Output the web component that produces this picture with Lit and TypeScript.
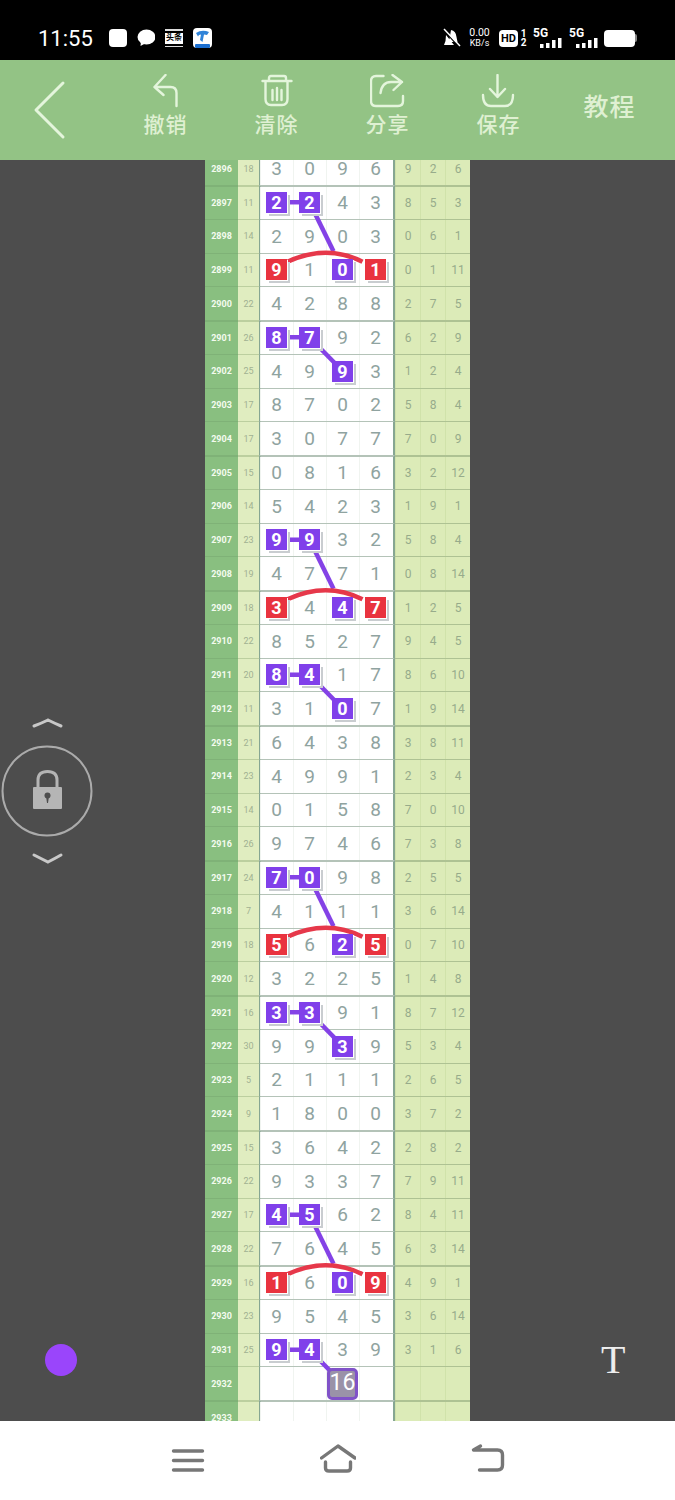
import { LitElement, html, css, svg } from 'lit';
import { customElement } from 'lit/decorators.js';

// issue sum digits right marks (p = purple, r = red, b = big entry box)
const RAW = `2896 18 3096 9,2,6 ....
2897 11 2243 8,5,3 pp..
2898 14 2903 0,6,1 ....
2899 11 9101 0,1,11 r.pr
2900 22 4288 2,7,5 ....
2901 26 8792 6,2,9 pp..
2902 25 4993 1,2,4 ..p.
2903 17 8702 5,8,4 ....
2904 17 3077 7,0,9 ....
2905 15 0816 3,2,12 ....
2906 14 5423 1,9,1 ....
2907 23 9932 5,8,4 pp..
2908 19 4771 0,8,14 ....
2909 18 3447 1,2,5 r.pr
2910 22 8527 9,4,5 ....
2911 20 8417 8,6,10 pp..
2912 11 3107 1,9,14 ..p.
2913 21 6438 3,8,11 ....
2914 23 4991 2,3,4 ....
2915 14 0158 7,0,10 ....
2916 26 9746 7,3,8 ....
2917 24 7098 2,5,5 pp..
2918 7 4111 3,6,14 ....
2919 18 5625 0,7,10 r.pr
2920 12 3225 1,4,8 ....
2921 16 3391 8,7,12 pp..
2922 30 9939 5,3,4 ..p.
2923 5 2111 2,6,5 ....
2924 9 1800 3,7,2 ....
2925 15 3642 2,8,2 ....
2926 22 9337 7,9,11 ....
2927 17 4562 8,4,11 pp..
2928 22 7645 6,3,14 ....
2929 16 1609 4,9,1 r.pr
2930 23 9545 3,6,14 ....
2931 25 9439 3,1,6 pp..`;

type Row = { issue: string; sum: string; digits: string[]; right: string[]; marks: string };

const ROWS: Row[] = RAW.split('\n').map((line) => {
  const [issue, sum, d, r, marks] = line.split(' ');
  return { issue, sum, digits: d.split(''), right: r.split(','), marks };
});
ROWS.push({ issue: '2932', sum: '', digits: ['', '', '16', ''], right: ['', '', ''], marks: '..b.' });
ROWS.push({ issue: '2933', sum: '', digits: ['', '', '', ''], right: ['', '', ''], marks: '....' });

const ROW_H = 33.75;
const cx = (col: number) => 71.5 + 33 * col;
const cy = (i: number) => (i + 0.5) * ROW_H + 0.6;

function overlay() {
  const parts: unknown[] = [];
  ROWS.forEach((row, i) => {
    if (row.marks.startsWith('pp')) {
      const y = cy(i);
      parts.push(svg`<line class="pu" x1=${cx(0) + 11} y1=${y} x2=${cx(1) - 10} y2=${y}></line>`);
      if (ROWS[i + 1].marks[2] !== '.') {
        parts.push(svg`<line class="pu" x1=${cx(1)} y1=${y} x2=${cx(2)} y2=${cy(i + 1)}></line>`);
      } else {
        // stops on the red arc, two rows down
        const t = 0.727;
        parts.push(svg`<line class="pu" x1=${cx(1)} y1=${y} x2=${cx(1) + 33 * t} y2=${y + 2 * ROW_H * t}></line>`);
      }
    }
    if (row.marks[0] === 'r') {
      const y = cy(i);
      parts.push(svg`<path class="re" d="M${cx(0) + 11} ${y - 8} Q${cx(1) + 17} ${y - 26} ${cx(3) - 13} ${y - 8}"></path>`);
    }
  });
  return parts;
}

@customElement('app-root')
export class AppRoot extends LitElement {
  static styles = css`
    :host {
      display: block;
      width: 675px;
      height: 1500px;
      overflow: hidden;
      font-family: Roboto, 'Noto Sans CJK SC', sans-serif;
      background: #4d4d4d;
    }

    .status {
      box-sizing: border-box;
      height: 60px;
      padding: 16px 38px 0;
      background: #000;
      color: #fff;
      display: flex;
      align-items: center;
    }
    .time { font-size: 22px; width: 71px; }
    .left-icons { display: flex; gap: 10px; align-items: center; }
    .sq { width: 18px; height: 18px; background: #fff; border-radius: 4px; }
    .toutiao {
      box-sizing: border-box;
      width: 18px;
      height: 18px;
      border-top: 2px solid #ddd;
      border-bottom: 1px solid #ddd;
      padding: 2px 0;
      display: flex;
    }
    .toutiao span {
      flex: 1;
      background: #fff;
      color: #000;
      font-size: 8px;
      line-height: 10px;
      font-weight: 700;
      text-align: center;
      white-space: nowrap;
      overflow: hidden;
    }
    .right-icons { margin-left: auto; display: flex; align-items: center; }
    .speed { width: 23px; margin: 0 8px 0 7px; text-align: center; font-size: 10.5px; line-height: 10px; }
    .speed small { display: block; font-size: 9px; }
    .hd {
      width: 19px;
      height: 17px;
      border-radius: 4px;
      background: #fff;
      color: #000;
      font-size: 11px;
      font-weight: 700;
      line-height: 17px;
      text-align: center;
    }
    .frac { width: 7px; margin: 0 6px 0 2px; font-size: 10px; line-height: 9px; font-weight: 700; text-align: center; }
    .frac span { display: block; }
    .five { width: 29px; margin-right: 7px; font-size: 12px; line-height: 10px; font-weight: 700; }
    .five svg { display: block; }
    .battery { width: 31px; height: 17px; border-radius: 4px; background: #fff; margin-left: -1px; }
    .nub { width: 2px; height: 8px; background: #888; border-radius: 0 2px 2px 0; }

    .bar {
      height: 100px;
      background: #93c385;
      display: grid;
      grid-template-columns: 110px repeat(5, 111px);
      color: #dff0d2;
    }
    .bar svg { display: block; fill: none; stroke: #e4f5dc; stroke-width: 2.4; stroke-linecap: round; stroke-linejoin: round; }
    .tool {
      padding-top: 15px;
      display: flex;
      flex-direction: column;
      align-items: center;
      font-size: 21px;
      font-weight: 500;
      line-height: 30px;
      letter-spacing: 1px;
    }
    .tool svg { margin-top: -1px; }
    .tutorial {
      display: flex;
      align-items: center;
      justify-content: center;
      padding-bottom: 11px;
      font-size: 25px;
      font-weight: 500;
      letter-spacing: 1px;
    }

    .main {
      position: relative;
      height: 1261px;
      overflow: hidden;
      display: flex;
      justify-content: center;
      background: #4d4d4d;
    }
    .table { position: relative; width: 265px; margin-top: -8.75px; align-self: flex-start; }
    .lines { position: absolute; left: 0; top: 0; pointer-events: none; }
    .lines .pu { stroke: #8442e6; stroke-width: 4.5; }
    .lines .re { stroke: #e6384a; stroke-width: 4.5; fill: none; }

    .row {
      display: grid;
      grid-template-columns: 33px 21px 136px 75px;
      height: 33.75px;
    }
    .row > div { box-sizing: border-box; border-top: 1px solid; }
    .issue {
      background: #89bf80;
      border-color: #7fb277 !important;
      color: #f4fbef;
      font-size: 9px;
      font-weight: 700;
      display: flex;
      align-items: center;
      justify-content: center;
    }
    .sum {
      background: #e0edc0;
      border-color: #bccf9f !important;
      color: #a0b192;
      font-size: 9px;
      display: flex;
      align-items: center;
      justify-content: center;
    }
    .digits {
      display: grid;
      grid-template-columns: repeat(4, 33px);
      background: #fff;
      border-left: 2px solid #86a692;
      border-right: 2px solid #86a692;
      border-top-color: #b4c3b8 !important;
    }
    .d {
      display: flex;
      align-items: center;
      justify-content: center;
      padding-right: 2px;
      color: #8fa3a0;
      font-size: 19px;
      line-height: 15px;
      border-left: 1px solid #f0f4f0;
      margin-left: -1px;
    }
    .d.box span {
      position: relative;
      z-index: 2;
      width: 21px;
      height: 21px;
      line-height: 21px;
      text-align: center;
      color: #fff;
      font-size: 18px;
      font-weight: 700;
      box-shadow: 1px 1px 0 #fff, 3px 3px 0 #c9cdd0;
    }
    .d.p span { background: #8040ea; }
    .d.r span { background: #e9333f; }
    .d.b span {
      position: relative;
      z-index: 2;
      box-sizing: border-box;
      width: 32px;
      height: 32px;
      margin-top: 1px;
      line-height: 24px;
      text-align: center;
      color: #fff;
      font-size: 23px;
      background: #9a92a8;
      border: 3px solid #8052c8;
      border-radius: 5px;
    }
    .right {
      display: grid;
      grid-template-columns: repeat(3, 25px);
      background: #dcebb8;
      border-color: #aec293 !important;
    }
    .right span {
      display: flex;
      align-items: center;
      justify-content: center;
      color: #97ab8b;
      font-size: 12px;
      border-left: 1px solid #d0e2aa;
    }
    .row.group .issue { border-top: 2px solid #77a878; }
    .row.group .sum { border-top: 2px solid #99b795; }
    .row.group .digits { border-top: 2px solid #86a692; }
    .row.group .right { border-top: 2px solid #8ea98a; }

    .lock { position: absolute; left: 0; top: 550px; }
    .dot { position: absolute; left: 45px; top: 1184px; width: 32px; height: 32px; border-radius: 50%; background: #9a45fb; }
    .font-t {
      position: absolute;
      left: 601px;
      top: 1174px;
      color: #eee;
      font-family: 'Liberation Serif', serif;
      font-size: 40px;
      line-height: 52px;
    }

    .nav {
      box-sizing: border-box;
      height: 79px;
      background: #fff;
      padding-top: 21px;
      display: grid;
      grid-template-columns: repeat(3, 150px);
      justify-content: center;
      justify-items: center;
    }
    .nav svg { display: block; fill: none; stroke: #777; stroke-width: 3.4; stroke-linecap: round; stroke-linejoin: round; }
  `;

  private renderRow(row: Row) {
    const first = (Number(row.issue) - 2897) % 4 === 0;
    return html`<div class="row ${first ? 'group' : ''}">
      <div class="issue">${row.issue}</div>
      <div class="sum">${row.sum}</div>
      <div class="digits">
        ${row.digits.map((v, c) => {
          const m = row.marks[c];
          if (m === '.') return html`<div class="d">${v}</div>`;
          return html`<div class="d ${m === 'b' ? 'b' : 'box ' + m}"><span>${v}</span></div>`;
        })}
      </div>
      <div class="right">${row.right.map((v) => html`<span>${v}</span>`)}</div>
    </div>`;
  }

  private signal() {
    return html`<div class="five">
      5G
      <svg width="29" height="10" viewBox="0 0 29 10" fill="#fff">
        <rect x="7" y="6" width="3.5" height="4"></rect>
        <rect x="13" y="5" width="3.5" height="5"></rect>
        <rect x="19" y="2" width="3.5" height="8"></rect>
        <rect x="25" y="0" width="3.5" height="10"></rect>
      </svg>
    </div>`;
  }

  render() {
    return html`
      <div class="status">
        <div class="time">11:55</div>
        <div class="left-icons">
          <div class="sq"></div>
          <svg width="18" height="18" viewBox="0 0 18 18" fill="#fff">
            <ellipse cx="9.5" cy="8" rx="9" ry="7.5"></ellipse>
            <path d="M4 12 L3.5 17 L9 14 Z"></path>
          </svg>
          <div class="toutiao"><span>头条</span></div>
          <svg width="19" height="20" viewBox="0 0 19 20">
            <rect width="19" height="20" rx="4" fill="#fff"></rect>
            <path d="M3 5 Q9 1 16 4 L14 7 L11 6.5 L9.5 14 L7 12 L8 6.5 Q5.5 6.5 5 8.5 Z" fill="#2f83d8"></path>
            <rect x="2" y="16" width="15" height="4" rx="1" fill="#1c6fd0"></rect>
          </svg>
        </div>
        <div class="right-icons">
          <svg width="19" height="20" viewBox="0 0 19 20" fill="#fff">
            <path d="M9 2 Q14 3 14.5 9 L15.5 14 H7 Z M4 7 L12 17 H2 L3.5 13 Z"></path>
            <path d="M1 1 L17 19" stroke="#000" stroke-width="1.5"></path>
            <path d="M2 1 L18 18" stroke="#fff" stroke-width="1.5"></path>
          </svg>
          <div class="speed">0.00<small>KB/s</small></div>
          <div class="hd">HD</div>
          <div class="frac"><span>1</span><span>2</span></div>
          ${this.signal()} ${this.signal()}
          <div class="battery"></div>
          <div class="nub"></div>
        </div>
      </div>

      <div class="bar">
        <div>
          <svg width="110" height="100" viewBox="0 0 110 100"><path d="M63 23 L36 50 L63 77" stroke-width="3"></path></svg>
        </div>
        <div class="tool">
          <svg width="36" height="36" viewBox="0 0 36 36"><path d="M17.5 1 L6.5 13 L15.5 21 M6.5 13 H22.5 Q28.5 13 28.5 19 V32"></path></svg>
          撤销
        </div>
        <div class="tool">
          <svg width="36" height="36" viewBox="0 0 36 36">
            <path d="M3.5 7 H32.5 M10 7 V4 Q10 2 12 2 H25 Q27 2 27 4 V7 M6.5 7 V25 Q6.5 31 12 31 H23 Q28.5 31 28.5 25 V7 M13.5 16 V26 M18 14 V26 M22.5 16 V26"></path>
          </svg>
          清除
        </div>
        <div class="tool">
          <svg width="36" height="36" viewBox="0 0 36 36">
            <path d="M13.5 2 H6 Q1 2 1 7 V27 Q1 32 6 32 H28 Q33 32 33 27 V22 M10.5 19 Q12 8 21 8 H32 M22.5 1 L32 8 L23.5 16"></path>
          </svg>
          分享
        </div>
        <div class="tool">
          <svg width="36" height="36" viewBox="0 0 36 36">
            <path d="M16.5 1 V23 M9 15 L16.5 23 L24 15 M2 21 Q2 32 10 32 H24 Q32 32 32 21"></path>
          </svg>
          保存
        </div>
        <div class="tutorial">教程</div>
      </div>

      <div class="main">
        <div class="table">
          ${ROWS.map((r) => this.renderRow(r))}
          <svg class="lines" width="265" height=${ROWS.length * ROW_H}>${overlay()}</svg>
        </div>

        <svg class="lock" width="96" height="160" viewBox="0 0 96 160" fill="none">
          <circle cx="47" cy="81" r="44.5" stroke="#ababab" stroke-width="2"></circle>
          <path d="M34 16 Q42 13 48 10 Q54 13 61 16" stroke="#c8c8c8" stroke-width="3" stroke-linecap="round"></path>
          <path d="M34 145 Q42 149 48 152 Q54 149 61 145" stroke="#c8c8c8" stroke-width="3" stroke-linecap="round"></path>
          <path d="M38 78 V70 Q38 61.5 47.5 61.5 Q57 61.5 57 70 V78" stroke="#b5b5b5" stroke-width="3"></path>
          <rect x="33" y="77" width="29" height="22" rx="1" fill="#b5b5b5"></rect>
          <circle cx="47.5" cy="85.5" r="3" fill="#4d4d4d"></circle>
          <path d="M46 86 H49 L48 93 H47 Z" fill="#4d4d4d"></path>
        </svg>
        <div class="dot"></div>
        <div class="font-t">T</div>
      </div>

      <div class="nav">
        <svg width="36" height="36" viewBox="0 0 36 36"><path d="M3.5 9 H32.5 M3.5 18.5 H32.5 M3.5 28 H32.5"></path></svg>
        <svg width="36" height="36" viewBox="0 0 36 36"><path d="M1.5 16 L18 4 L35 16 M5.5 20 V26 Q5.5 29 9 29 H27 Q30.5 29 30.5 26 V20"></path></svg>
        <svg width="36" height="36" viewBox="0 0 36 36"><path d="M10.5 4 L3.5 8 H27.5 Q32.5 8 32.5 13 V23 Q32.5 28 27.5 28 H9.5"></path></svg>
      </div>
    `;
  }
}

declare global {
  interface HTMLElementTagNameMap {
    'app-root': AppRoot;
  }
}
